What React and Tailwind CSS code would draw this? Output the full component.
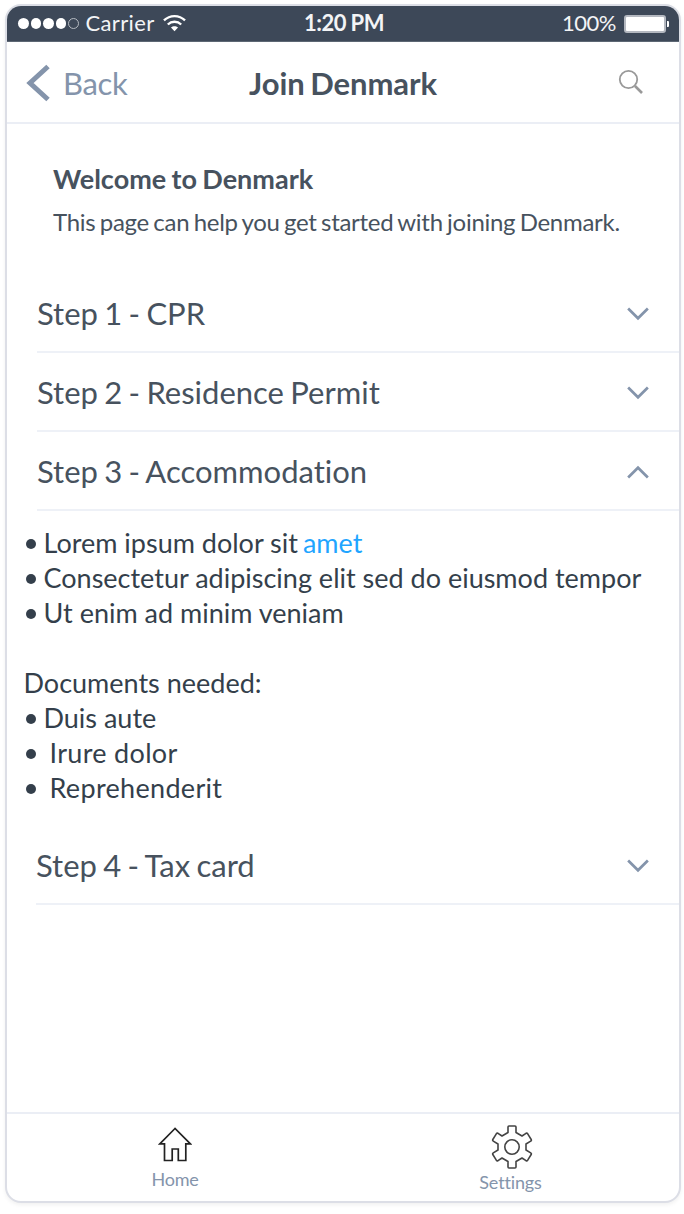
import React from "react";

function Wifi() {
  return (
    <svg className="-mt-px ml-[8px] h-[18px] w-[23px]" viewBox="0 0 24 18" fill="none" stroke="#fff" strokeWidth="2.4">
      <path d="M1 6.3C7.2 0.2 16.8 0.2 23 6.3" />
      <path d="M5 10.6c4-3.9 10-3.9 14 0" />
      <path d="M8.3 13.8c2.2-2 5.2-2 7.4 0L12 17.6z" fill="#fff" stroke="none" />
    </svg>
  );
}

function StatusBar() {
  return (
    <div className="grid h-[36px] shrink-0 grid-cols-3 items-center border-b border-[#5d6774] bg-[#3d4858] text-[22px] leading-[36px] text-[#f3f4f6]">
      <div className="flex items-center pl-[11px]">
        <div className="flex gap-[2px]">
          {[0, 1, 2, 3].map((i) => (
            <span key={i} className="size-[10.5px] rounded-full bg-white" />
          ))}
          <span className="size-[10.5px] rounded-full border border-[#b5bac1]" />
        </div>
        <span className="-mt-[2px] ml-[7px] tracking-[0.35px]">Carrier</span>
        <Wifi />
      </div>
      <div className="-mt-[2px] pl-[2px] text-center font-bold tracking-[-0.45px] [word-spacing:-0.5px]">1:20 PM</div>
      <div className="flex items-center justify-end pr-[10px]">
        <span className="-mt-[2px] tracking-[-0.5px]">100%</span>
        <svg className="ml-[8px] h-[18px] w-[45px]" viewBox="0 0 45 18">
          <rect x="1" y="1" width="40" height="16" rx="2" fill="#fff" stroke="#b4b8c0" strokeWidth="2" />
          <path d="M43 6h1q1 0 1 1v4q0 1-1 1h-1z" fill="#fff" />
        </svg>
      </div>
    </div>
  );
}

function Header() {
  return (
    <header className="grid h-[82px] shrink-0 grid-cols-[1fr_auto_1fr] items-center border-b-2 border-[#ebeef5]">
      <div className="flex items-center pt-[2px] pl-[19px] text-[#8494ab]">
        <svg className="h-[38px] w-[25px]" viewBox="0 0 25 38" fill="none" stroke="currentColor" strokeWidth="5">
          <path d="M22 2.5L4 19l18 16.500" />
        </svg>
        <span className="-mt-px ml-[12px] text-[31px] leading-[40px] tracking-[-0.35px]">Back</span>
      </div>
      <h1 className="pt-px text-[31px] leading-[40px] font-bold tracking-[-0.05px] text-[#47525e] [word-spacing:-2px]">Join Denmark</h1>
      <div className="flex justify-end pr-[35px]">
        <svg className="h-[26px] w-[26px]" viewBox="0 0 26 26" fill="none" stroke="#999" strokeWidth="1.8">
          <circle cx="10.500" cy="10.500" r="8.700" />
          <path d="M17 17l7 7" strokeWidth="2.6" />
        </svg>
      </div>
    </header>
  );
}

function Step({ children, open = false }) {
  return (
    <div className="ml-[30px] flex h-[79px] items-center justify-between border-b-2 border-[#eef1f7] pt-[2px] pr-[30px] text-[31px] text-[#47525e]">
      <span className="[word-spacing:-1.6px]">{children}</span>
      <svg className="h-[14px] w-[22px]" viewBox="0 0 23 14" fill="none" stroke="#8494ab" strokeWidth="2.8">
        <path d={open ? "M1.2 12.8L11.5 2.5l10.3 10.3" : "M1.2 1.2l10.3 10.3L21.8 1.2"} />
      </svg>
    </div>
  );
}

function Item({ children, wide = false }) {
  return (
    <li className="flex items-center">
      <span className="mt-[3px] ml-[2px] size-[10.5px] rounded-full bg-[#343f4b]" />
      <span className={wide ? "ml-[13.5px] tracking-[0.32px]" : "ml-[7.5px]"}>{children}</span>
    </li>
  );
}

export default function App() {
  return (
    <div className="h-[1214px] w-[684px] bg-white pt-[4px] pl-[5px] font-['Lato',sans-serif] [font-variant-ligatures:none]">
      <div className="flex h-[1199px] w-[676px] flex-col overflow-hidden rounded-[16px] border-2 border-[#dcdee6] bg-white shadow-[0_2px_4px_rgba(0,0,0,0.06)]">
        <StatusBar />
        <Header />
        <main className="flex-1">
          <section className="pt-[37px] pl-[46px] text-[#47525e]">
            <h2 className="text-[27px] leading-[36px] font-bold [word-spacing:-1.2px]">Welcome to Denmark</h2>
            <p className="mt-[7px] text-[24px] leading-[36px] tracking-[-0.28px] whitespace-nowrap [word-spacing:-1.5px]">This page can help you get started with joining Denmark.</p>
          </section>
          <div className="mt-[34px]">
            <Step>Step 1 - CPR</Step>
            <Step>Step 2 - Residence Permit</Step>
            <Step open>Step 3 - Accommodation</Step>
          </div>
          <div className="mt-[14px] pl-[16.5px] text-[27px] leading-[35px] whitespace-nowrap text-[#343f4b]">
            <ul>
              <Item>
                Lorem ipsum dolor sit<a className="ml-[5px] text-[#1fa5ff]">amet</a>
              </Item>
              <Item>Consectetur adipiscing elit sed do eiusmod tempor</Item>
              <Item>Ut enim ad minim veniam</Item>
            </ul>
            <p className="mt-[35px]">Documents needed:</p>
            <ul>
              <Item>Duis aute</Item>
              <Item wide>Irure dolor</Item>
              <Item wide>Reprehenderit</Item>
            </ul>
          </div>
          <div className="-ml-px mt-[21px]">
            <Step>Step 4 - Tax card</Step>
          </div>
        </main>
        <nav className="grid h-[89px] shrink-0 grid-cols-2 border-t-2 border-[#ebeef5] text-[18px] leading-[24px] text-[#8494ab]">
          <div className="flex flex-col items-center pt-[13px]">
            <svg className="h-[36px] w-[34px]" viewBox="0 0 34 36" fill="none" stroke="#222" strokeWidth="1.7">
              <path d="M17 1.500L1.800 16.800H6.500V33.500h7.700V22h6.100V33.500h7.500V16.800h4.600z" />
            </svg>
            <span className="mt-[4px] tracking-[-0.2px]">Home</span>
          </div>
          <div className="flex flex-col items-center pt-[11px]">
            <svg className="ml-[2px] h-[44px] w-[42px]" viewBox="0 0 42 44" fill="none" stroke="#444" strokeWidth="1.6" strokeLinejoin="round">
              <path d="M17 2q0-1 1-1h6q1 0 1 1v5.500l6 3.500 4-2.700q1-.5 1.700.5l3.500 5.700q.5 1-.5 1.600l-4.700 2.900v6l4.700 2.900q1 .6.5 1.600l-3.500 5.700q-.7 1-1.700.5l-4-2.700-6 3.500V42q0 1-1 1h-6q-1 0-1-1v-5.500l-6-3.500-4 2.700q-1 .5-1.700-.5L1.800 29.500q-.5-1 .5-1.600L7 25v-6l-4.700-2.900q-1-.6-.5-1.600l3.500-5.700q.7-1 1.700-.5l4 2.700 6-3.500z" />
              <circle cx="21" cy="22" r="7.200" />
            </svg>
            <span className="mt-px mr-px tracking-[-0.15px]">Settings</span>
          </div>
        </nav>
      </div>
    </div>
  );
}
